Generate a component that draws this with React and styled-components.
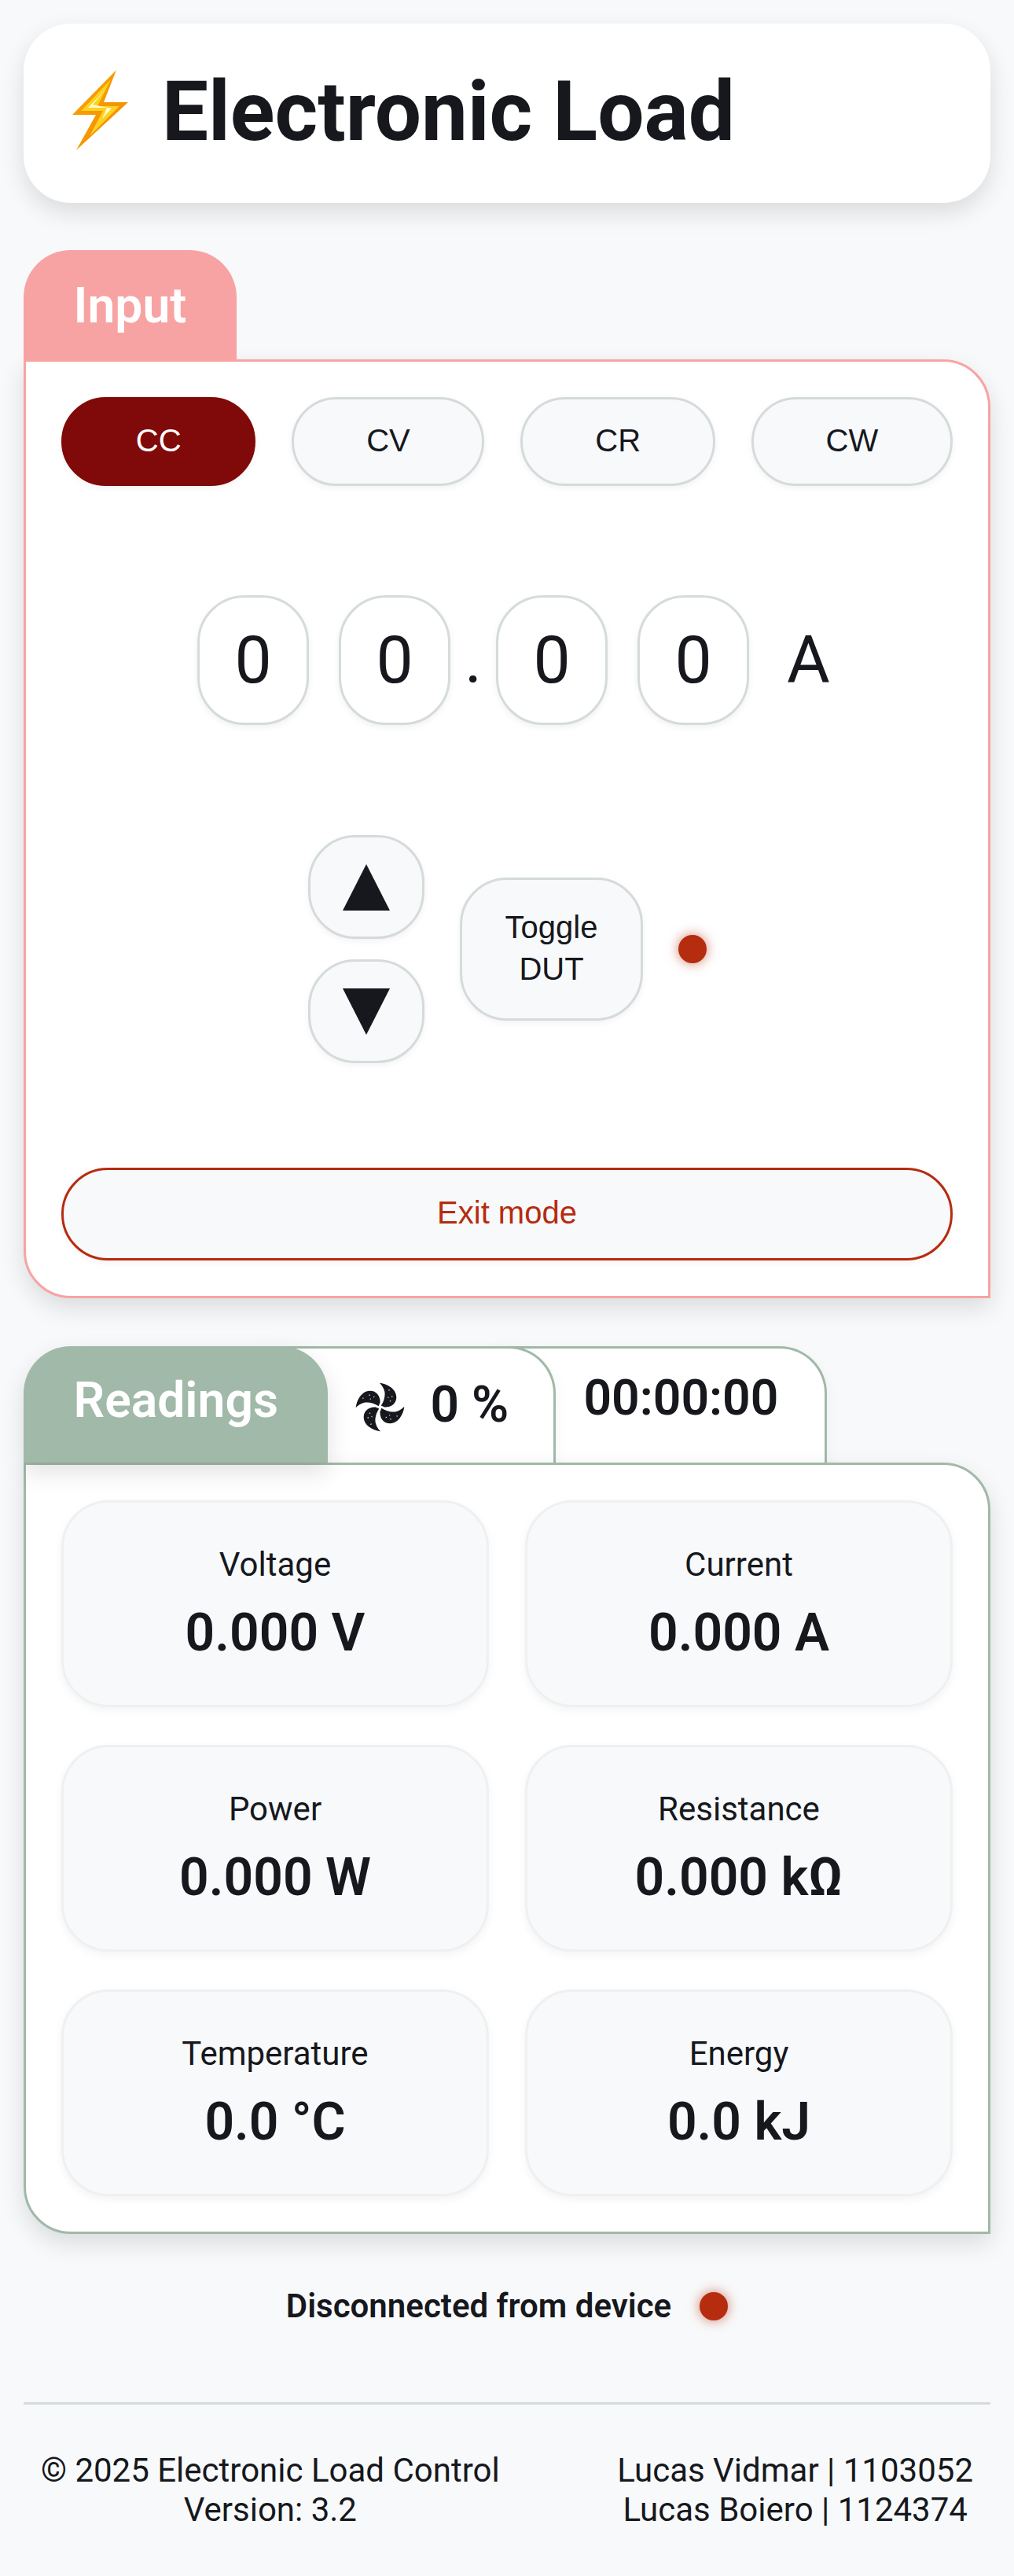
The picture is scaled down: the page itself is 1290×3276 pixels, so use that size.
import React from "react";
import styled, { createGlobalStyle, css } from "styled-components";

const GlobalStyle = createGlobalStyle`
  html, body { margin: 0; padding: 0; background: #f8f9fa; }
  body { font-family: Roboto, "Liberation Sans", sans-serif; color: #16181d; }
  * { box-sizing: border-box; }
`;

const RED = "#b52c0f";
const PINK = "#f8a3a3";
const GREEN = "#a1b9a8";
const GREY = "#d5dbdb";
const PANEL_SHADOW = "0 12px 30px rgba(0, 0, 0, 0.12)";

const Page = styled.div`
  width: 1290px;
  height: 3276px;
  padding: 30px;
  display: flex;
  flex-direction: column;
`;

const Header = styled.header`
  height: 228px;
  background: #fff;
  border-radius: 60px;
  box-shadow: ${PANEL_SHADOW};
  display: flex;
  align-items: flex-start;
  padding: 59px 0 0 62px;
  gap: 42px;
  margin-bottom: 60px;
`;

const Title = styled.h1`
  margin: 0;
  font-size: 105px;
  line-height: 108px;
  font-weight: 700;
`;

const Section = styled.section`
  display: flex;
  flex-direction: column;
  margin-bottom: ${(p) => p.$gap || 0}px;
`;

const Tabs = styled.div`
  display: flex;
  align-items: stretch;
  height: ${(p) => p.$height}px;
`;

const Tab = styled.div`
  border-radius: 60px 60px 0 0;
  font-size: 62.4px;
  font-weight: 600;
  line-height: 66px;
  white-space: nowrap;
  display: flex;
`;

const TitleTab = styled(Tab)`
  background: ${(p) => p.$color};
  color: #fff;
  padding: ${(p) => p.$top}px 63.5px 0;
  position: relative;
  z-index: 3;
  ${(p) =>
    p.$shadow &&
    css`
      box-shadow: ${PANEL_SHADOW};
    `}
`;

const InfoTab = styled(Tab)`
  background: #fff;
  border: 3px solid ${GREEN};
  border-bottom: 0;
  position: relative;
  box-shadow: 0 6px 18px rgba(0, 0, 0, 0.05);
  margin-left: -130px;
`;

const FanTab = styled(InfoTab)`
  width: 420px;
  padding: 43px 0 0 162px;
  gap: 32px;
  z-index: 1;
  span {
    line-height: 58px;
    font-size: 64px;
  }
`;

const TimerTab = styled(InfoTab)`
  width: 475px;
  padding: 30px 0 0 162px;
`;

const Panel = styled.div`
  background: #fff;
  border: 3px solid ${(p) => p.$color};
  border-radius: 0 60px 0 60px;
  box-shadow: ${PANEL_SHADOW};
  padding: 45px;
  display: flex;
  flex-direction: column;
  position: relative;
  z-index: 2;
`;

const ModeRow = styled.div`
  display: flex;
  gap: 46px;
  margin-bottom: 139px;
`;

const Button = styled.button`
  font-family: "Liberation Sans", Arial, sans-serif;
  font-size: 40px;
  color: #16181d;
  background: #f8f9fa;
  border: 3px solid ${GREY};
  box-shadow: 0 3px 9px rgba(0, 0, 0, 0.05);
  padding: 0 0 3px;
`;

const ModeButton = styled(Button)`
  flex: 1 1 auto;
  height: 113px;
  border-radius: 57px;
  ${(p) =>
    p.$active &&
    css`
      background: #800909;
      border-color: #800909;
      color: #fff;
    `}
`;

const DigitRow = styled.div`
  display: flex;
  justify-content: center;
  align-items: center;
  margin-bottom: 140px;
  padding-left: 17px;
  font-size: 84px;
  line-height: 1;
`;

const Digit = styled.div`
  width: 142px;
  height: 165px;
  border: 3px solid ${GREY};
  border-radius: 60px;
  background: #fff;
  box-shadow: 0 3px 9px rgba(0, 0, 0, 0.06);
  display: flex;
  align-items: center;
  justify-content: center;
  margin-right: ${(p) => p.$gap || 0}px;
`;

const Dot = styled.span`
  width: 58px;
  text-align: center;
`;

const Unit = styled.span`
  margin-left: 10px;
`;

const ControlRow = styled.div`
  display: flex;
  align-items: center;
  padding-left: 314px;
  margin-bottom: 133px;
`;

const Arrows = styled.div`
  display: flex;
  flex-direction: column;
  gap: 26px;
  margin-right: 45px;
`;

const ArrowButton = styled(Button)`
  width: 148px;
  height: 132px;
  border-radius: 60px;
  padding: 0;
  display: flex;
  align-items: center;
  justify-content: center;
`;

const ToggleButton = styled(Button)`
  width: 233px;
  height: 182px;
  border-radius: 60px;
  line-height: 53px;
  margin-right: 45px;
`;

const Led = styled.span`
  display: block;
  flex: none;
  width: 36px;
  height: 36px;
  border-radius: 50%;
  background: ${RED};
  box-shadow: 0 0 15px rgba(181, 44, 15, 0.6);
`;

const ExitButton = styled(Button)`
  height: 118px;
  border-radius: 59px;
  border-color: ${RED};
  color: ${RED};
`;

const CardGrid = styled.div`
  display: grid;
  grid-template-columns: 1fr 1fr;
  column-gap: 46px;
  row-gap: 48px;
`;

const Card = styled.div`
  height: 263px;
  background: #f8f9fa;
  border: 3px solid #eef0f1;
  border-radius: 60px;
  box-shadow: 0 4px 12px rgba(0, 0, 0, 0.05);
  display: flex;
  flex-direction: column;
  align-items: center;
  padding-top: 54px;
`;

const CardLabel = styled.div`
  font-size: 42px;
  line-height: 50px;
`;

const CardValue = styled.div`
  font-size: 66px;
  line-height: 76px;
  font-weight: 600;
  margin-top: 24px;
`;

const Status = styled.div`
  display: flex;
  justify-content: center;
  align-items: center;
  gap: 36px;
  margin-top: 67px;
  font-size: 42px;
  line-height: 50px;
  font-weight: 600;
`;

const Footer = styled.footer`
  margin-top: 97px;
  border-top: 3px solid ${GREY};
  padding: 59px 22px 0;
  display: flex;
  justify-content: space-between;
  font-size: 42px;
  line-height: 50px;
  text-align: center;
`;

const Bolt = () => (
  <svg width="72" height="103" viewBox="0 0 72 103" style={{ flex: "none" }}>
    <defs>
      <linearGradient id="boltEdge" x1="0" y1="0" x2="1" y2="1">
        <stop offset="0" stopColor="#f9a606" />
        <stop offset="1" stopColor="#f08a00" />
      </linearGradient>
    </defs>
    <polygon points="56,0 0,57 30,57 5,102 71,41 40,41" fill="url(#boltEdge)" />
    <polygon points="49,12 11,52 39,52 22,84 60,46 32,46" fill="#ffd21f" />
    <polygon points="42,25 20,48 44,48 38,62 50,49 26,44" fill="#fffbc8" />
  </svg>
);

const Blade = ({ angle }) => (
  <g transform={`rotate(${angle} 50 50)`}>
    <path
      d="M49 1 C66 3 83 14 83 30 C83 43 72 51 59 50 L52 47 C58 38 61 27 59 18 C57 10 53 5 49 1 Z"
      fill="#16181d"
    />
    <path d="M68 14l2 2-3 1zM74 27l2 2-3 1zM66 29l2 2-2 1zM72 39l-3-1 2-2z" fill="#fff" />
  </g>
);

const Fan = () => (
  <svg width="63" height="63" viewBox="0 0 100 100" style={{ flex: "none" }}>
    {[0, 90, 180, 270].map((a) => (
      <Blade key={a} angle={a} />
    ))}
  </svg>
);

const Triangle = ({ down }) => (
  <svg width="60" height="59" viewBox="0 0 60 59">
    <polygon points={down ? "0,0 60,0 30,59" : "30,0 60,59 0,59"} fill="#16181d" />
  </svg>
);

const readings = [
  ["Voltage", "0.000 V"],
  ["Current", "0.000 A"],
  ["Power", "0.000 W"],
  ["Resistance", "0.000 kΩ"],
  ["Temperature", "0.0 °C"],
  ["Energy", "0.0 kJ"],
];

export default function App() {
  return (
    <Page>
      <GlobalStyle />
      <Header>
        <Bolt />
        <Title>Electronic Load</Title>
      </Header>

      <Section $gap={61}>
        <Tabs $height={139}>
          <TitleTab $color={PINK} $top={38}>Input</TitleTab>
        </Tabs>
        <Panel $color={PINK}>
          <ModeRow>
            <ModeButton $active>CC</ModeButton>
            <ModeButton>CV</ModeButton>
            <ModeButton>CR</ModeButton>
            <ModeButton>CW</ModeButton>
          </ModeRow>
          <DigitRow>
            <Digit $gap={38}>0</Digit>
            <Digit>0</Digit>
            <Dot>.</Dot>
            <Digit $gap={38}>0</Digit>
            <Digit $gap={38}>0</Digit>
            <Unit>A</Unit>
          </DigitRow>
          <ControlRow>
            <Arrows>
              <ArrowButton><Triangle /></ArrowButton>
              <ArrowButton><Triangle down /></ArrowButton>
            </Arrows>
            <ToggleButton>Toggle<br />DUT</ToggleButton>
            <Led />
          </ControlRow>
          <ExitButton>Exit mode</ExitButton>
        </Panel>
      </Section>

      <Section>
        <Tabs $height={148}>
          <TitleTab $color={GREEN} $top={36} $shadow>Readings</TitleTab>
          <FanTab><Fan /><span>0 %</span></FanTab>
          <TimerTab>00:00:00</TimerTab>
        </Tabs>
        <Panel $color={GREEN}>
          <CardGrid>
            {readings.map(([label, value]) => (
              <Card key={label}>
                <CardLabel>{label}</CardLabel>
                <CardValue>{value}</CardValue>
              </Card>
            ))}
          </CardGrid>
        </Panel>
      </Section>

      <Status>
        <span>Disconnected from device</span>
        <Led />
      </Status>

      <Footer>
        <div>© 2025 Electronic Load Control<br />Version: 3.2</div>
        <div>Lucas Vidmar | 1103052<br />Lucas Boiero | 1124374</div>
      </Footer>
    </Page>
  );
}
